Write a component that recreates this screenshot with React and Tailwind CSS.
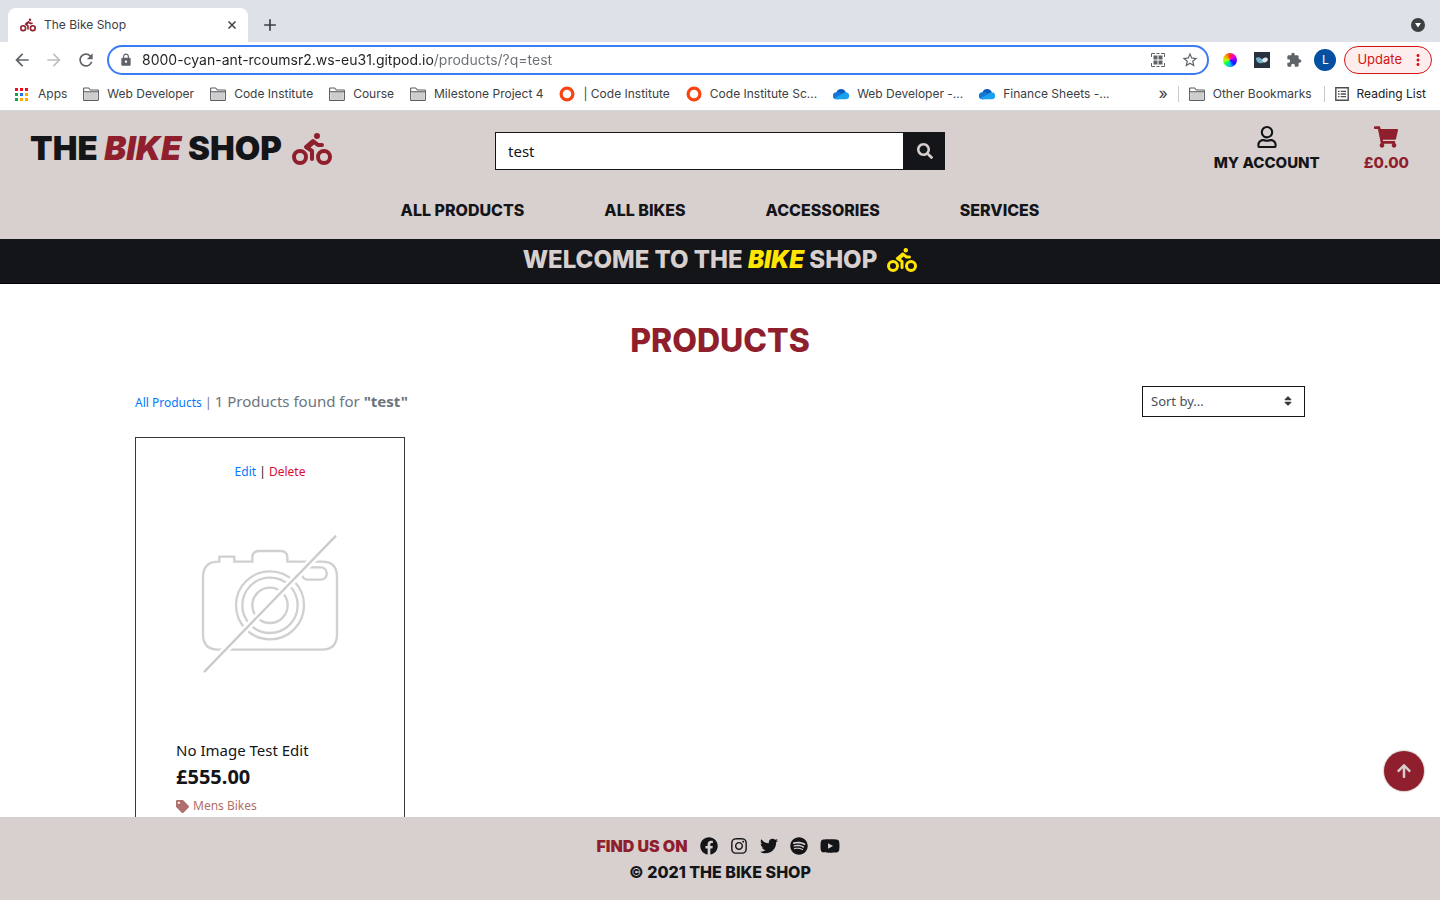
import React from 'react';
import { FaBiking, FaSearch, FaRegUser, FaShoppingCart, FaTag, FaFacebook, FaInstagram, FaTwitter, FaSpotify, FaYoutube, FaSort, FaArrowUp } from 'react-icons/fa';
import { MdArrowBack, MdArrowForward, MdRefresh, MdLock, MdStarBorder, MdExtension, MdAdd, MdMoreVert } from 'react-icons/md';

const BOOKMARKS = [
  { label: 'Web Developer', icon: 'folder' },
  { label: 'Code Institute', icon: 'folder' },
  { label: 'Course', icon: 'folder' },
  { label: 'Milestone Project 4', icon: 'folder' },
  { label: '| Code Institute', icon: 'ring' },
  { label: 'Code Institute Sc...', icon: 'ring' },
  { label: 'Web Developer -...', icon: 'cloud' },
  { label: 'Finance Sheets -...', icon: 'cloud' },
];

const NAV = ['ALL PRODUCTS', 'ALL BIKES', 'ACCESSORIES', 'SERVICES'];

const SOCIAL = [
  ['Facebook', FaFacebook, 'size-[18px]'],
  ['Instagram', FaInstagram, 'size-[18px]'],
  ['Twitter', FaTwitter, 'size-[18px]'],
  ['Spotify', FaSpotify, 'size-[18px]'],
  ['YouTube', FaYoutube, 'size-5'],
];

function FolderIcon() {
  return (
    <svg viewBox="0 0 16 14" className="h-3.5 w-4 shrink-0" aria-hidden="true">
      <path d="M.6 12.8V1.6q0-.6.6-.6h4.4l1.8 2h7.4q.6 0 .6.6v9.2q0 .6-.6.6H1.200q-.6 0-.6-.6Z" fill="#fff" stroke="#5a5d61" strokeWidth="1.100" />
      <path d="M1.500 5h13v7.500h-13Z" fill="#cdcdcd" />
      <path d="M.6 4.700h14.800" stroke="#5a5d61" />
    </svg>
  );
}

function BookmarkIcon({ kind }) {
  if (kind === 'folder') return <FolderIcon />;
  if (kind === 'ring') {
    return (
      <svg viewBox="0 0 16 16" className="size-4 shrink-0" aria-hidden="true">
        <circle cx="8" cy="8" r="5.900" fill="none" stroke="#fa4410" strokeWidth="3.200" />
      </svg>
    );
  }
  return (
    <svg viewBox="0 0 16 12" className="h-3 w-4 shrink-0" aria-hidden="true">
      <path d="M3.500 4.200A5 5 0 0 1 12.700 4l.3 3-9 .5Z" fill="#0a5bc0" />
      <path d="M3.600 4.200a3.600 3.600 0 0 0-1 7.100h3l5-5.300-4-1.700a5 5 0 0 0-3-.1Z" fill="#1277d6" />
      <path d="M9.500 5.700l1.400-.9a3.500 3.500 0 0 1 1.600-.5 3.500 3.500 0 0 1 .3 7H3.500q-1.200 0-2.200-1Z" fill="#1aa2ef" />
    </svg>
  );
}

function AppsIcon() {
  const dots = ['#f00c1c', '#f00c1c', '#f00c1c', '#16a34a', '#1a73e8', '#f9ab00', '#16a34a', '#f9ab00', '#f9ab00'];
  return (
    <svg viewBox="0 0 13 13" className="size-[13px] shrink-0" aria-hidden="true">
      {dots.map((fill, i) => (
        <rect key={i} x={(i % 3) * 5} y={Math.floor(i / 3) * 5} width="3" height="3" fill={fill} />
      ))}
    </svg>
  );
}

function QrIcon() {
  return (
    <svg viewBox="0 0 14 14" className="size-3.5" fill="none" stroke="#5f6368" aria-hidden="true">
      <path d="M.5 4V.5H4M10 .5h3.500V4M13.500 10v3.500H10M4 13.500H.5V10M5.500.5h3M5.500 13.500h3" />
      <path d="M2.500 2.500h4v4h-4ZM7.500 2.500h4v4h-4ZM2.500 7.500h4v4h-4ZM7.500 7.500h4v4h-4Z" fill="#5f6368" stroke="none" />
    </svg>
  );
}

function ReadingListIcon() {
  return (
    <svg viewBox="0 0 14 14" className="size-3.5 shrink-0" fill="none" stroke="#4a4d51" aria-hidden="true">
      <path d="M.8.8h12.400v12.400H.8Z" strokeWidth="1.400" />
      <path d="M3 4.300h1.500M5.700 4.300H11M3 7h1.500M5.700 7H11M3 9.700h1.500M5.700 9.700H11" strokeWidth="1.300" />
    </svg>
  );
}

function BirdIcon() {
  return (
    <svg viewBox="0 0 16 16" className="size-4" aria-hidden="true">
      <path d="M0 0h16v16H0Z" fill="#2b3040" />
      <path d="M2 6.200C3 4.700 5.800 5 7.800 7l1.700 3.300c-1.200 1.200-2.800 1.300-4.200.7C3.300 10.400 2 8.600 2 6.200Z" fill="#6fb3c6" />
      <path d="M7.800 8C9 5.300 12.500 4.600 13.800 6.800c.5 2.200-2 4-4.300 3.700Z" fill="#dfe8ef" />
    </svg>
  );
}

function NoImage() {
  return (
    <svg viewBox="-12 -30 564 564" className="w-full" fill="none" role="img" aria-label="No image">
      <g stroke="#d0d0d0" strokeWidth="7">
        <path d="M121 125Q69 122 69 172V343Q69 389 115 389H426Q471 389 471 343V170Q471 125 426 125H322V112Q322 93 301 93H238Q217 93 217 112V125H163V110H118V125" />
        <circle cx="270" cy="256" r="102" />
        <circle cx="270" cy="256" r="83" />
        <circle cx="270" cy="256" r="53" />
        <rect x="366" y="142" width="74" height="37" rx="17" />
      </g>
      <path d="M74 454 466 49" stroke="#fff" strokeWidth="22" />
      <path d="M74 454 466 49" stroke="#cbcbcb" strokeWidth="7" strokeLinecap="round" />
    </svg>
  );
}

function BrowserChrome() {
  return (
    <div className="shrink-0 border-b border-[#d5d7da] bg-white font-[Inter,sans-serif] text-xs text-[#3c4043]">
      <div className="flex h-[42px] items-end bg-[#dee1e8] pr-[15px] pl-2">
        <div className="flex h-[34px] w-60 items-center rounded-t-lg bg-white pr-3 pl-3">
          <FaBiking className="size-4 text-[#8f1f2d]" />
          <span className="ml-2 grow">The Bike Shop</span>
          <button aria-label="Close tab">
            <svg viewBox="0 0 8 8" className="size-2" aria-hidden="true"><path d="M.5.5l7 7M7.500.5l-7 7" stroke="#3c4043" strokeWidth="1.500" /></svg>
          </button>
        </div>
        <button aria-label="New tab" className="ml-3 flex h-[34px] items-center"><MdAdd className="size-5" /></button>
        <button aria-label="Search tabs" className="mb-2.5 ml-auto flex size-3.5 items-center justify-center rounded-full bg-[#3c4043]">
          <svg viewBox="0 0 14 14" className="size-3.5" aria-hidden="true"><path d="M4 5h6l-3 4.500Z" fill="#fff" /></svg>
        </button>
      </div>
      <div className="flex h-9 items-center pr-2 pl-3">
        <button aria-label="Back" className="text-[#5f6368]"><MdArrowBack className="size-5" /></button>
        <button aria-label="Forward" className="ml-3 text-[#bdbfc2]"><MdArrowForward className="size-5" /></button>
        <button aria-label="Reload" className="ml-3 text-[#5f6368]"><MdRefresh className="size-5" /></button>
        <div className="ml-[11px] flex h-[30px] grow items-center rounded-full border-2 border-[#3b7bf6] pr-2 pl-2.5">
          <MdLock className="size-3.5 text-[#5f6368]" />
          <input
            aria-label="Address"
            defaultValue="8000-cyan-ant-rcoumsr2.ws-eu31.gitpod.io/products/?q=test"
            className="ml-[9px] min-w-0 grow bg-[linear-gradient(to_right,#202124_292px,#6b6f73_292px)] bg-clip-text text-sm text-transparent outline-none"
          />
          <button aria-label="Scan code" className="mr-4"><QrIcon /></button>
          <button aria-label="Bookmark page" className="text-[#5f6368]"><MdStarBorder className="size-[18px]" /></button>
        </div>
        <button aria-label="Colour picker" className="ml-3.5 size-3.5 rounded-full bg-[conic-gradient(#ff2a2a,#ff00d4,#7a00ff,#0022ff,#00b7ff,#00ff55,#b7ff00,#ff9d00,#ff2a2a)]" />
        <button aria-label="Extension" className="ml-[17px]"><BirdIcon /></button>
        <button aria-label="Extensions" className="ml-4 text-[#5f6368]"><MdExtension className="size-4" /></button>
        <button aria-label="Profile" className="ml-3 flex size-[22px] items-center justify-center rounded-full bg-[#0550a0] text-white">L</button>
        <button className="ml-2 flex h-7 items-center rounded-full border border-[#d41414] bg-[#fdeeed] pr-1 pl-3 text-[13px] text-[#d41414]">
          Update
          <MdMoreVert className="ml-[7px] size-[18px]" />
        </button>
      </div>
      <div className="flex h-8 items-center pr-3.5 pl-[15px] whitespace-nowrap">
        <a href="#apps" className="flex items-center gap-2.5"><AppsIcon />Apps</a>
        <div className="flex min-w-0 items-center">
          {BOOKMARKS.map(({ label, icon }) => (
            <a key={label} href="#bookmark" className="ml-4 flex items-center gap-2">
              <BookmarkIcon kind={icon} />
              {label}
            </a>
          ))}
        </div>
        <button aria-label="More bookmarks" className="ml-auto pb-0.5 text-base">»</button>
        <a href="#other" className="ml-2.5 flex items-center gap-2 border-l border-[#c8cacd] pl-2.5"><FolderIcon />Other Bookmarks</a>
        <a href="#reading" className="ml-3 flex items-center gap-2 border-l border-[#c8cacd] pl-2.5 text-[#202124]"><ReadingListIcon />Reading List</a>
      </div>
    </div>
  );
}

function ShopHeader() {
  return (
    <header className="shrink-0 bg-[#d8d0ce] font-[Inter,sans-serif] font-extrabold text-[#131519]">
      <div className="grid h-20 grid-cols-3 items-center">
        <a href="#home" className="flex items-center pb-1 pl-[30px] text-[33px] font-black whitespace-nowrap">
          <span>THE <em className="text-[#8f1f2d]">BIKE</em> SHOP</span>
          <FaBiking className="ml-2.5 h-8 w-10 text-[#8f1f2d]" />
        </a>
        <form className="mx-[15px] flex h-[38px]" onSubmit={(e) => e.preventDefault()}>
          <input
            aria-label="Search"
            defaultValue="test"
            className="min-w-0 grow border border-[#131519] bg-white px-3 font-['Noto_Sans',sans-serif] text-[15px] font-normal outline-none"
          />
          <button aria-label="Search" className="flex w-[41px] items-center justify-center bg-[#131519] text-[#d8d0ce]">
            <FaSearch className="size-4" />
          </button>
        </form>
        <div className="flex justify-end gap-11 pr-[31px] pb-0.5 text-[15px] leading-6">
          <a href="#account" className="flex flex-col items-center gap-[3px]"><FaRegUser className="size-[22px]" />MY ACCOUNT</a>
          <a href="#cart" className="flex flex-col items-center gap-[3px] text-[#8f1f2d]"><FaShoppingCart className="h-[22px] w-6" />£0.00</a>
        </div>
      </div>
      <nav className="flex h-12 justify-center gap-20 pt-[7px]">
        {NAV.map((item) => <a key={item} href="#nav">{item}</a>)}
      </nav>
    </header>
  );
}

export default function App() {
  return (
    <div className="flex h-screen flex-col overflow-hidden bg-white">
      <BrowserChrome />
      <ShopHeader />
      <div className="flex h-[45px] shrink-0 items-center justify-center border-b border-black bg-[#131519] pb-0.5 font-[Inter,sans-serif] text-2xl font-extrabold text-[#d8d0ce]">
        <span>WELCOME TO THE <em className="font-black text-[#ffe500]">BIKE</em> SHOP</span>
        <FaBiking className="ml-2.5 h-6 w-[30px] text-[#ffe500]" />
      </div>
      <main className="relative min-h-0 grow overflow-hidden font-['Noto_Sans',sans-serif]">
        <div className="mx-auto max-w-[1170px] pt-9">
          <h1 className="text-center font-[Inter,sans-serif] text-[32px] leading-[42px] font-extrabold text-[#8f1f2d]">PRODUCTS</h1>
          <div className="mt-6 flex items-center justify-between">
            <p className="text-[15px] text-[#6c757d]">
              <a href="#all" className="text-xs text-[#007bff]">All Products</a>
              <span className="text-xs"> | </span>
              1 Products found for <strong>"test"</strong>
            </p>
            <div className="relative w-[163px]">
              <select aria-label="Sort by" className="h-[31px] w-full appearance-none border border-[#131519] bg-white px-2 text-[13px] text-[#495057]">
                <option>Sort by...</option>
              </select>
              <FaSort className="pointer-events-none absolute top-[9px] right-[11px] size-3 text-[#343a40]" />
            </div>
          </div>
          <div className="mt-5 grid grid-cols-4 gap-[30px]">
            <article className="border border-[#343a40] px-10 pt-6 pb-6 text-[#131519]">
              <div className="text-center text-xs leading-5">
                <a href="#edit" className="text-[#007bff]">Edit</a> | <a href="#delete" className="text-[#dc0a37]">Delete</a>
              </div>
              <div className="mt-7"><NoImage /></div>
              <h2 className="mt-10 text-[15px] leading-6">No Image Test Edit</h2>
              <p className="text-xl leading-[30px] font-bold">£555.00</p>
              <a href="#mens" className="flex items-center gap-1 text-xs leading-7 text-[#b06f6c]"><FaTag className="size-[13px]" />Mens Bikes</a>
            </article>
          </div>
        </div>
        <button aria-label="Back to top" className="absolute right-4 bottom-[26px] flex size-10 items-center justify-center rounded-full bg-[#8f1f2d] text-[#d8d0ce] shadow-[0_0_1px_1px_#d8d0ce]">
          <FaArrowUp className="size-4" />
        </button>
      </main>
      <footer className="flex h-[83px] shrink-0 flex-col items-center bg-[#d8d0ce] pt-4 font-[Inter,sans-serif] leading-[26px] font-extrabold text-[#131519]">
        <div className="flex items-center gap-3 pr-1">
          <span className="font-black text-[#8f1f2d]">FIND US ON</span>
          {SOCIAL.map(([name, Icon, size]) => (
            <a key={name} href="#social" aria-label={name}><Icon className={size} /></a>
          ))}
        </div>
        <p>© 2021 THE BIKE SHOP</p>
      </footer>
    </div>
  );
}
